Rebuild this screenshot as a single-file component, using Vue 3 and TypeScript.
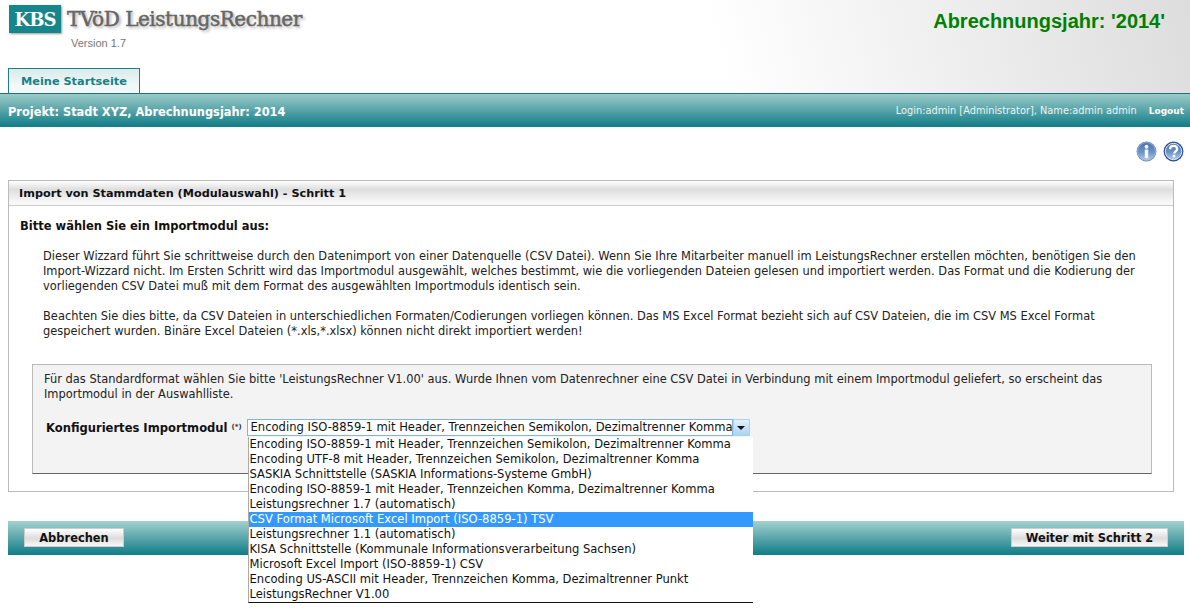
<script setup lang="ts">
const options: string[] = [
  'Encoding ISO-8859-1 mit Header, Trennzeichen Semikolon, Dezimaltrenner Komma',
  'Encoding UTF-8 mit Header, Trennzeichen Semikolon, Dezimaltrenner Komma',
  'SASKIA Schnittstelle (SASKIA Informations-Systeme GmbH)',
  'Encoding ISO-8859-1 mit Header, Trennzeichen Komma, Dezimaltrenner Komma',
  'Leistungsrechner 1.7 (automatisch)',
  'CSV Format Microsoft Excel Import (ISO-8859-1) TSV',
  'Leistungsrechner 1.1 (automatisch)',
  'KISA Schnittstelle (Kommunale Informationsverarbeitung Sachsen)',
  'Microsoft Excel Import (ISO-8859-1) CSV',
  'Encoding US-ASCII mit Header, Trennzeichen Komma, Dezimaltrenner Punkt',
  'LeistungsRechner V1.00',
]
const selectedIndex = 5
</script>

<template>
  <div class="page">
    <div class="top">
      <header class="head">
        <div class="brand">
          <div class="logo-row">
            <div class="logo">KBS</div>
            <div class="product">TVöD LeistungsRechner</div>
          </div>
          <div class="version">Version 1.7</div>
        </div>
        <div class="year">Abrechnungsjahr: '2014'</div>
      </header>
      <div class="tabs"><div class="tab">Meine Startseite</div></div>
    </div>
    <div class="nav">
      <div class="project">Projekt: Stadt XYZ, Abrechnungsjahr: 2014</div>
      <div class="user">
        <span>Login:admin [Administrator], Name:admin admin</span>
        <b>Logout</b>
      </div>
    </div>
    <div class="tools">
      <svg class="ico" viewBox="0 0 22 22" aria-label="Info">
        <defs>
          <linearGradient id="g1" x1="0" y1="0" x2="0" y2="1">
            <stop offset="0" stop-color="#4a72b0" />
            <stop offset="0.55" stop-color="#6d94c8" />
            <stop offset="1" stop-color="#b4cbe6" />
          </linearGradient>
        </defs>
        <circle cx="11" cy="11" r="10.4" fill="#5f82b8" />
        <circle cx="11" cy="11" r="9.4" fill="url(#g1)" stroke="#a8bfdd" stroke-width="0.7" />
        <circle cx="11" cy="6" r="2" fill="#f4f8fc" />
        <rect x="9.2" y="9" width="3.6" height="9" rx="0.8" fill="#f4f8fc" />
      </svg>
      <svg class="ico" viewBox="0 0 22 22" aria-label="Hilfe">
        <circle cx="11" cy="11" r="10.4" fill="#2f4f94" />
        <circle cx="11" cy="11" r="8.6" fill="url(#g1)" stroke="#e6edf6" stroke-width="1" />
        <path d="M7.4 8.6c0-2.3 1.7-3.4 3.7-3.4s3.7 1.1 3.7 3.1c0 2.7-3 2.6-3 4.9" fill="none" stroke="#fff" stroke-width="2.3" />
        <rect x="10.2" y="14.4" width="2.6" height="2.7" fill="#fff" />
      </svg>
    </div>
    <section class="panel">
      <h2 class="panel-title">Import von Stammdaten (Modulauswahl) - Schritt 1</h2>
      <div class="panel-body">
        <div class="lead">Bitte wählen Sie ein Importmodul aus:</div>
        <div class="intro">
          <p>Dieser Wizzard führt Sie schrittweise durch den Datenimport von einer Datenquelle (CSV Datei). Wenn Sie Ihre Mitarbeiter manuell im LeistungsRechner erstellen möchten, benötigen Sie den<br>Import-Wizzard nicht. Im Ersten Schritt wird das Importmodul ausgewählt, welches bestimmt, wie die vorliegenden Dateien gelesen und importiert werden. Das Format und die Kodierung der<br>vorliegenden CSV Datei muß mit dem Format des ausgewählten Importmoduls identisch sein.</p>
          <p>Beachten Sie dies bitte, da CSV Dateien in unterschiedlichen Formaten/Codierungen vorliegen können. Das MS Excel Format bezieht sich auf CSV Dateien, die im CSV MS Excel Format<br>gespeichert wurden. Binäre Excel Dateien (*.xls,*.xlsx) können nicht direkt importiert werden!</p>
        </div>
        <div class="box">
          <p class="hint">Für das Standardformat wählen Sie bitte 'LeistungsRechner V1.00' aus. Wurde Ihnen vom Datenrechner eine CSV Datei in Verbindung mit einem Importmodul geliefert, so erscheint das<br>Importmodul in der Auswahlliste.</p>
          <div class="field">
            <label class="label">Konfiguriertes Importmodul</label>
            <span class="req">(*)</span>
            <div class="select">
              <div class="value">{{ options[0] }}</div>
              <div class="arrow"><i></i></div>
              <ul class="list">
                <li v-for="(o, i) in options" :key="o" :class="{ on: i === selectedIndex }">{{ o }}</li>
              </ul>
            </div>
          </div>
        </div>
      </div>
    </section>
    <div class="actions">
      <button class="btn b1">Abbrechen</button>
      <button class="btn b2">Weiter mit Schritt 2</button>
    </div>
  </div>
</template>

<style>
html, body { margin: 0; background: #fff; }
</style>

<style scoped>
.page { width: 1190px; height: 612px; overflow: hidden; font-family: "DejaVu Sans", Verdana, sans-serif; font-size: 11.45px; color: #222; }
.top { height: 93px; background: linear-gradient(75deg, #fff 60%, #ddd 100%); }
.head { height: 68px; display: flex; justify-content: space-between; }
.brand { padding: 5px 0 0 9px; }
.logo-row { display: flex; align-items: flex-start; }
.logo { width: 52px; height: 28px; background: #17868a; color: #fff; font: bold 18px/29px "DejaVu Serif", serif; letter-spacing: -1px; text-align: center; box-shadow: 1px 1px 2px #999; }
.product { margin-left: 6px; font: 20px/29px "DejaVu Serif", serif; letter-spacing: -0.45px; color: #666; -webkit-text-stroke: 0.5px #666; text-shadow: 2px 2px 3px #aaa; white-space: nowrap; }
.version { margin: 2px 0 0 62px; font: 11px/14px "Liberation Sans", Arial, sans-serif; color: #777; }
.year { margin: 8px 25px 0 0; font: bold 20px/26px "Liberation Sans", Arial, sans-serif; color: #008000; }
.tabs { height: 25px; padding-left: 8px; }
.tab { width: 130px; height: 24px; border: 1px solid #17808a; border-bottom: 0; background: linear-gradient(#d9ebea, #f2f8f8 70%); color: #17808a; font-weight: bold; font-size: 11.3px; line-height: 26px; text-align: center; }
.nav { height: 33px; border-top: 1px solid #17757c; background: linear-gradient(#9ccbc9, #17808a 95%); display: flex; justify-content: space-between; align-items: center; color: #fff; padding: 0 6px 0 8px; }
.project { font-weight: bold; font-size: 11.4px; padding-top: 2px; }
.user { font-size: 9.8px; display: flex; gap: 12px; color: #eaf5f5; align-items: center; }
.user b { color: #fff; font-size: 9px; }
.tools { height: 53px; display: flex; justify-content: flex-end; gap: 6px; padding: 14px 6px 0 0; box-sizing: border-box; }
.ico { width: 21px; height: 21px; }
.panel { width: 1166px; height: 312px; margin-left: 8px; border: 1px solid #bbb; box-sizing: border-box; }
.panel-title { margin: 0; height: 25px; box-sizing: border-box; padding-left: 10px; font-size: 11.25px; font-weight: bold; line-height: 26px; color: #111; border-bottom: 1px solid #ccc; background: linear-gradient(#fff, #dedede 35%, #f8f8f8 90%); }
.panel-body { padding: 13px 22px 0 11px; }
.lead { font-weight: bold; color: #111; line-height: 14px; font-size: 11.5px; }
.intro { margin: 16px 0 0 23px; line-height: 15px; white-space: nowrap; }
.intro p { margin: 0 0 15px; }
.box { margin: 25px 0 0 12px; width: 1120px; height: 110px; box-sizing: border-box; background: #f3f3f3; border: 1px solid #bbb; border-bottom: 1px solid #666; padding: 7px 0 0 11px; }
.hint { margin: 0; line-height: 15px; white-space: nowrap; }
.field { display: flex; align-items: flex-start; margin-top: 18px; padding-left: 2px; }
.label { font-weight: bold; color: #111; line-height: 16px; font-size: 11.55px; }
.req { font-size: 7px; font-weight: bold; margin: 3px 0 0 4px; width: 15px; color: #333; }
.select { position: relative; display: flex; height: 17px; width: 503px; background: #fff; margin-top: -1px; }
.value { width: 486px; box-sizing: border-box; border: 1px solid #7eb4ea; padding-left: 3px; font-size: 11.57px; line-height: 15px; color: #111; white-space: nowrap; overflow: hidden; }
.arrow { width: 17px; box-sizing: border-box; background: linear-gradient(#e3f1fc, #a9d4f5); border: 1px solid #b4cfe8; display: flex; align-items: center; justify-content: center; }
.arrow i { width: 0; height: 0; border: 4px solid transparent; border-top: 4px solid #111; border-bottom: 0; }
.list { position: absolute; left: 1px; top: 18px; width: 505px; box-sizing: border-box; margin: 0; padding: 0; list-style: none; background: #fff; border-left: 1px solid #aaa; border-bottom: 1px solid #111; z-index: 3; }
.list li { height: 15px; font-size: 11.55px; line-height: 15px; padding-left: 1px; color: #111; white-space: nowrap; }
.list li.on { background: #3399ff; color: #fff; }
.actions { width: 1176px; height: 34px; margin: 29px 0 0 8px; box-sizing: border-box; background: linear-gradient(#a3d1cf, #17808a 95%); display: flex; justify-content: space-between; align-items: center; padding: 0 16px 2px 16px; }
.btn { height: 19px; padding: 1px 0 0; border: 1px solid #ccc; background: linear-gradient(#fff, #dcdcdc 55%, #f8f8f8); font: bold 11.45px "DejaVu Sans", Verdana, sans-serif; color: #111; }
.b1 { width: 100px; }
.b2 { width: 157px; }
</style>
